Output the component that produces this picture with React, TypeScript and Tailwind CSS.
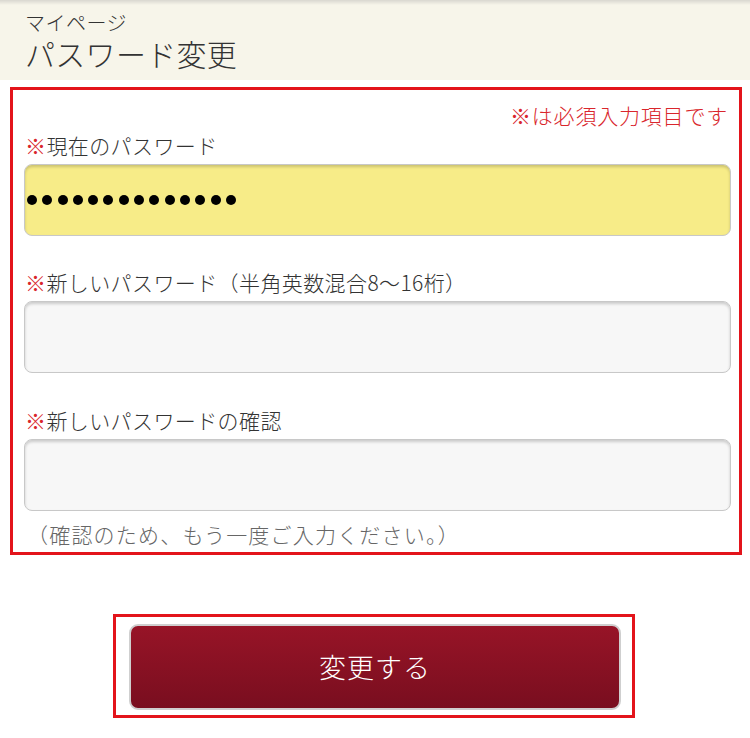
import React from "react";

const font = "font-['Noto_Sans_CJK_JP','Noto_Sans',sans-serif]";

function Field({
  label,
  note,
  filled,
  className = "",
}: {
  label: string;
  note?: string;
  filled?: boolean;
  className?: string;
}) {
  return (
    <div className={className}>
      <p className="pl-[1px] text-[21px] font-light leading-[30px] tracking-[0.4px] text-[#333]">
        <span className="text-[#d9262c]">※</span>
        {label}
      </p>
      <div
        className={`mt-[4px] flex h-[72px] items-center rounded-[8px] border border-[#c8c8c8] px-[2px] shadow-[inset_0_2px_3px_rgba(0,0,0,0.18)] ${
          filled ? "bg-[#f7ec88]" : "bg-[#f7f7f7]"
        }`}
      >
        {filled && (
          <div className="flex gap-[5.3px]" aria-label="password">
            {Array.from({ length: 14 }).map((_, i) => (
              <span key={i} className="h-[10px] w-[10px] rounded-full bg-black" />
            ))}
          </div>
        )}
      </div>
      {note && (
        <p className="mt-[8px] pl-[3px] text-[21px] font-light leading-[30px] tracking-[1.2px] text-[#666]">
          {note}
        </p>
      )}
    </div>
  );
}

export default function App() {
  return (
    <div className={`min-h-[738px] w-[750px] bg-white ${font}`}>
      <header className="h-[80px] bg-[linear-gradient(to_bottom,#d9d7d0_0px,#f7f5ea_5px,#f7f5ea_100%)] pl-[25px] pt-[13px]">
        <p className="text-[20px] font-light leading-[20px] tracking-[0.5px] text-[#333]">マイページ</p>
        <h1 className="mt-[3px] text-[30px] font-light leading-[34px] tracking-[0.3px] text-[#333]">パスワード変更</h1>
      </header>

      <section className="ml-[10px] mt-[7px] w-[732px] border-[3px] border-[#e3141b] pb-[3px] pl-[11px] pr-[8px] pt-[10px]">
        <p className="pr-[3px] text-right text-[21px] font-light leading-[30px] tracking-[0.8px] text-[#d9262c]">
          ※は必須入力項目です
        </p>
        <Field label="現在のパスワード" filled />
        <Field label="新しいパスワード（半角英数混合8〜16桁）" className="mt-[31px]" />
        <Field
          label="新しいパスワードの確認"
          className="mt-[32px]"
          note="（確認のため、もう一度ご入力ください。）"
        />
      </section>

      <div className="ml-[113px] mt-[59px] w-[522px] border-[3px] border-[#e3141b] pb-[5px] pl-[13px] pr-[11px] pt-[7px]">
        <button className="flex h-[86px] w-full items-center justify-center rounded-[9px] border-2 border-[#cfcfcf] bg-[linear-gradient(to_bottom,#971427,#790e1f)] text-[27px] font-light tracking-[1px] text-white">
          変更する
        </button>
      </div>
    </div>
  );
}
